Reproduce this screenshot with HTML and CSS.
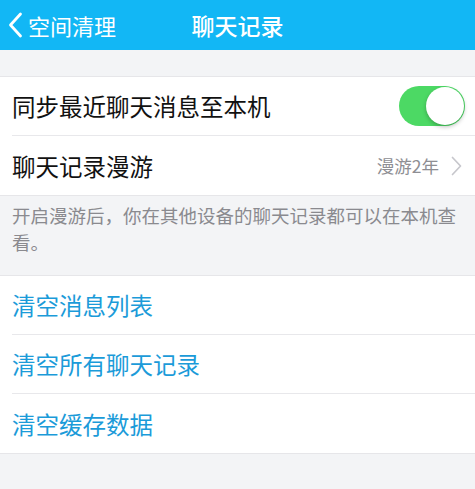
FILE: index.html
```html
<!DOCTYPE html>
<html lang="zh-CN">
<head>
  <meta charset="UTF-8" />
  <meta name="viewport" content="width=device-width, initial-scale=1.0"/>
  <title>聊天记录</title>
  <link rel="stylesheet" href="styles.css">
</head>
<body>

  <header class="nav-bar">
    <a class="nav-back" href="#">
      <svg class="back-icon" viewBox="0 0 15 26" width="15" height="26">
        <path d="M12.5 2 L2.5 13 L12.5 24" fill="none" stroke="#fff" stroke-width="2.8" stroke-linecap="round" stroke-linejoin="round"/>
      </svg>
      <span>空间清理</span>
    </a>
    <h1 class="nav-title">聊天记录</h1>
  </header>

  <!-- Synchronisation -->
  <div class="group first-group">
    <div class="cell">
      <span class="cell-label">同步最近聊天消息至本机</span>
      <div class="switch on"><div class="switch-knob"></div></div>
    </div>
    <div class="cell">
      <span class="cell-label">聊天记录漫游</span>
      <span class="cell-value">漫游2年
        <svg class="chevron" viewBox="0 0 11 20" width="11" height="20">
          <path d="M1.5 1.5 L9.5 10 L1.5 18.5" fill="none" stroke="#c7c7cc" stroke-width="1.7" stroke-linecap="round" stroke-linejoin="round"/>
        </svg>
      </span>
    </div>
  </div>

  <p class="group-note">开启漫游后，你在其他设备的聊天记录都可以在本机查看。</p>

  <!-- Actions -->
  <div class="group">
    <div class="cell"><span class="cell-action">清空消息列表</span></div>
    <div class="cell"><span class="cell-action">清空所有聊天记录</span></div>
    <div class="cell"><span class="cell-action">清空缓存数据</span></div>
  </div>

</body>
</html>
```

FILE: styles.css
```css
* {
  margin: 0;
  padding: 0;
  box-sizing: border-box;
  font-family: 'Noto Sans CJK SC', 'Noto Sans', sans-serif;
}

body {
  background-color: #f3f4f6;
  color: #111;
  width: 475px;
  min-height: 489px;
}

/* Barre de navigation */
.nav-bar {
  height: 50px;
  background-color: #12b7f5;
  display: flex;
  align-items: center;
  position: relative;
}

.nav-back {
  display: flex;
  align-items: center;
  gap: 5px;
  padding-left: 8px;
  color: #fff;
  text-decoration: none;
  font-size: 22px;
  line-height: 1;
}

.nav-title {
  position: absolute;
  left: 0;
  right: 0;
  text-align: center;
  font-size: 23px;
  font-weight: 500;
  color: #fff;
  line-height: 50px;
  pointer-events: none;
}

.group {
  background-color: #fff;
  border-top: 1px solid #e6e6e9;
  border-bottom: 1px solid #e6e6e9;
}

.first-group {
  margin-top: 26px;
}

.cell {
  height: 59px;
  display: flex;
  align-items: center;
  justify-content: space-between;
  margin-left: 12px;
  padding-right: 10px;
  border-bottom: 1px solid #e8e8eb;
}

.cell:last-child {
  border-bottom: none;
}

.cell-label {
  font-size: 23.5px;
  color: #111;
}

.cell-action {
  font-size: 23.5px;
  color: #1b9bd9;
}

.cell-value {
  display: flex;
  align-items: center;
  gap: 12px;
  font-size: 17.5px;
  color: #8e8e93;
  padding-right: 3px;
}

/* Interrupteur */
.switch {
  width: 66px;
  height: 40px;
  border-radius: 20px;
  background-color: #4cd964;
  position: relative;
}

.switch-knob {
  position: absolute;
  top: 1px;
  right: 1px;
  width: 38px;
  height: 38px;
  border-radius: 50%;
  background-color: #fff;
  box-shadow: 0 2px 4px rgba(0, 0, 0, 0.25);
}

.group-note {
  padding: 6px 12px 19px;
  font-size: 18.5px;
  line-height: 27px;
  color: #8a8a8f;
}
```
